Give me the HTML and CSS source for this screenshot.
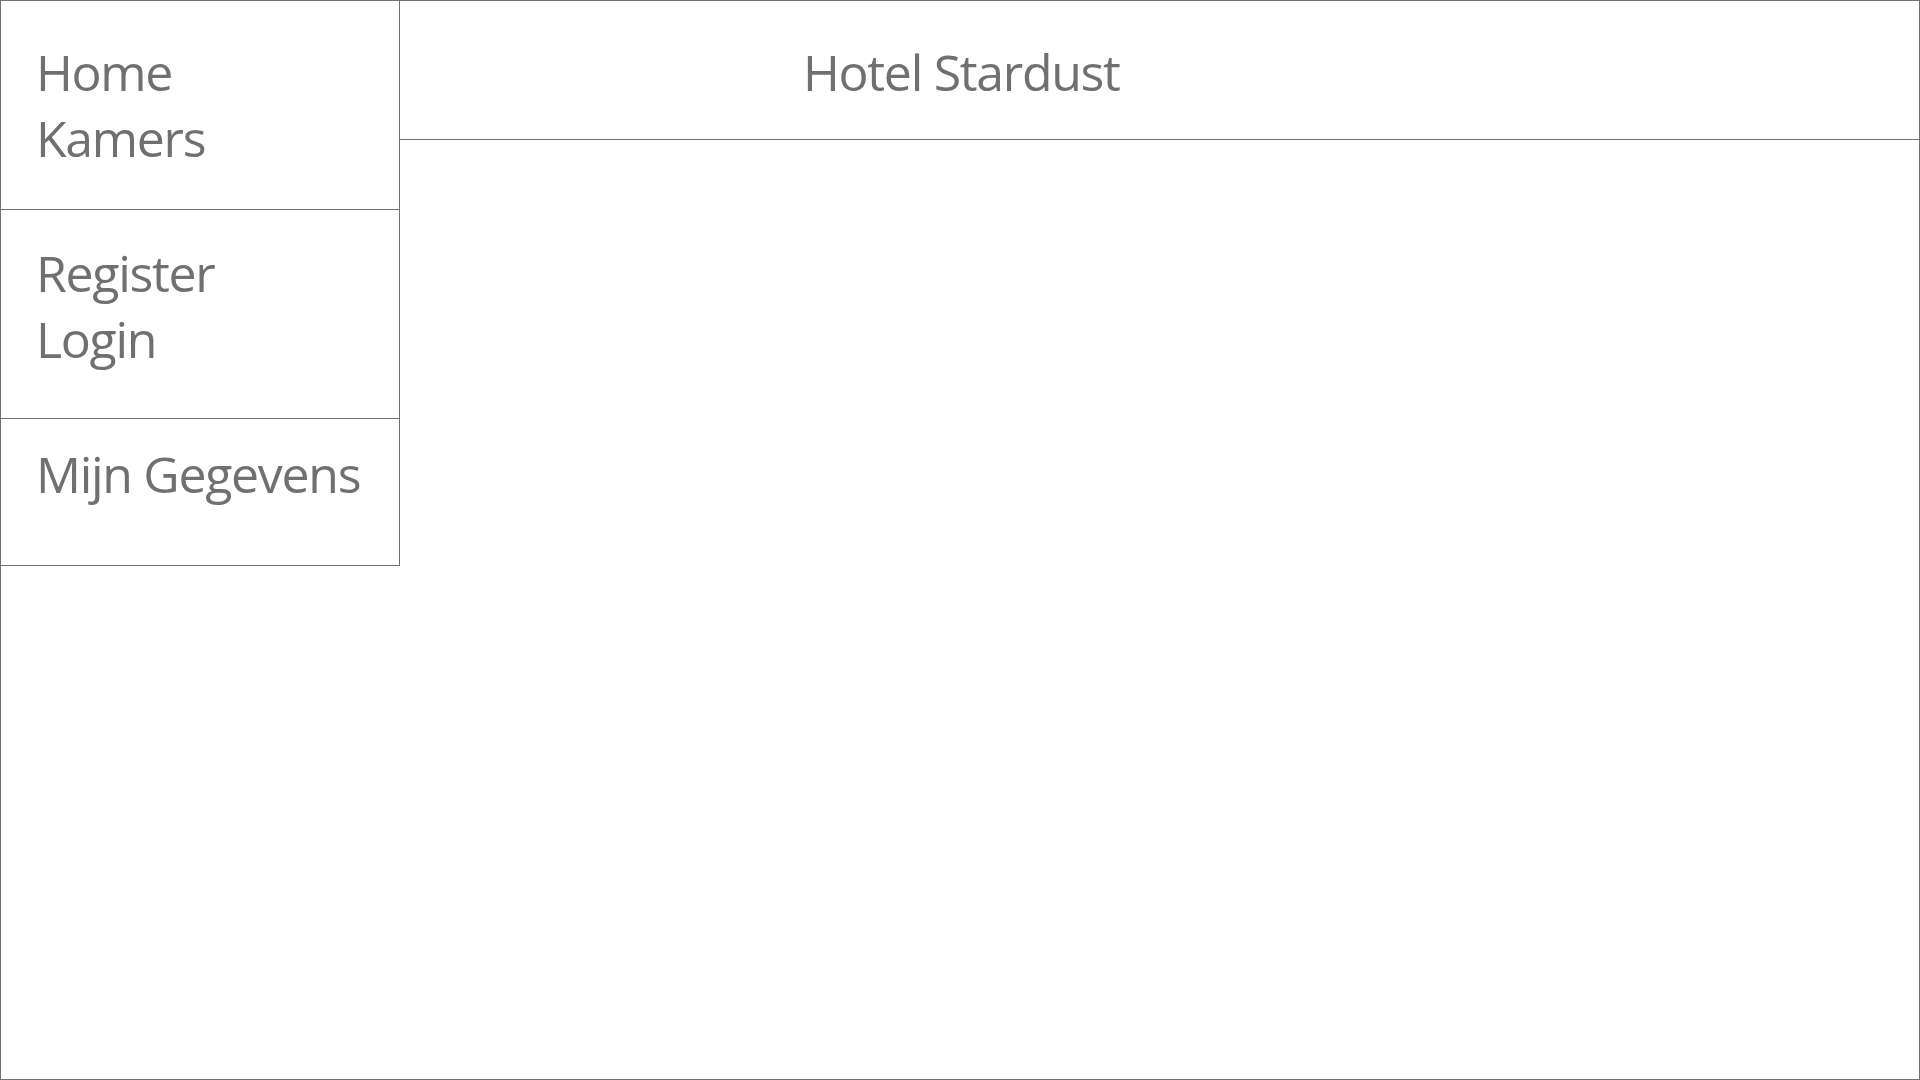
FILE: index.html
```html
<!DOCTYPE html>
<html lang="nl">
<head>
<meta charset="utf-8">
<title>Hotel Stardust</title>
<link rel="stylesheet" href="styles.css">
</head>
<body>
<div class="frame">
  <nav class="sidebar">
    <div class="nav-group group-main">
      <a class="nav-link" href="#">Home</a>
      <a class="nav-link" href="#">Kamers</a>
    </div>
    <div class="nav-group group-account">
      <a class="nav-link" href="#">Register</a>
      <a class="nav-link" href="#">Login</a>
    </div>
    <div class="nav-group group-profile">
      <a class="nav-link" href="#">Mijn Gegevens</a>
    </div>
  </nav>
  <main class="main">
    <header class="header">
      <h1 class="title">Hotel Stardust</h1>
    </header>
    <section class="content"></section>
  </main>
</div>
</body>
</html>
```
FILE: styles.css
```css
html, body {
  margin: 0;
  padding: 0;
  background: #ffffff;
}

.frame {
  box-sizing: border-box;
  width: 1920px;
  height: 1080px;
  border: 1px solid #707070;
  display: flex;
  align-items: flex-start;
  font-family: "Open Sans", "Noto Sans", sans-serif;
  color: #707070;
}

.sidebar {
  width: 398px;
  flex: none;
  border-right: 1px solid #707070;
  border-bottom: 1px solid #707070;
  display: flex;
  flex-direction: column;
}

.nav-group {
  box-sizing: border-box;
  display: flex;
  flex-direction: column;
  padding-left: 35px;
  border-bottom: 1px solid #707070;
}

.nav-group:last-child {
  border-bottom: none;
}

.group-main {
  height: 209px;
  padding-top: 38px;
}

.group-account {
  height: 209px;
  padding-top: 30px;
}

.group-profile {
  height: 146px;
  padding-top: 22px;
}

.nav-link {
  font-size: 50px;
  line-height: 66px;
  color: #707070;
  text-decoration: none;
  letter-spacing: -1.3px;
}

.main {
  flex: 1;
  display: flex;
  flex-direction: column;
  align-self: stretch;
}

.header {
  box-sizing: border-box;
  height: 139px;
  border-bottom: 1px solid #707070;
  padding-top: 38px;
  padding-left: 403px;
}

.title {
  margin: 0;
  font-size: 50px;
  line-height: 66px;
  font-weight: 400;
  letter-spacing: -1.3px;
}

.content {
  flex: 1;
}
```
